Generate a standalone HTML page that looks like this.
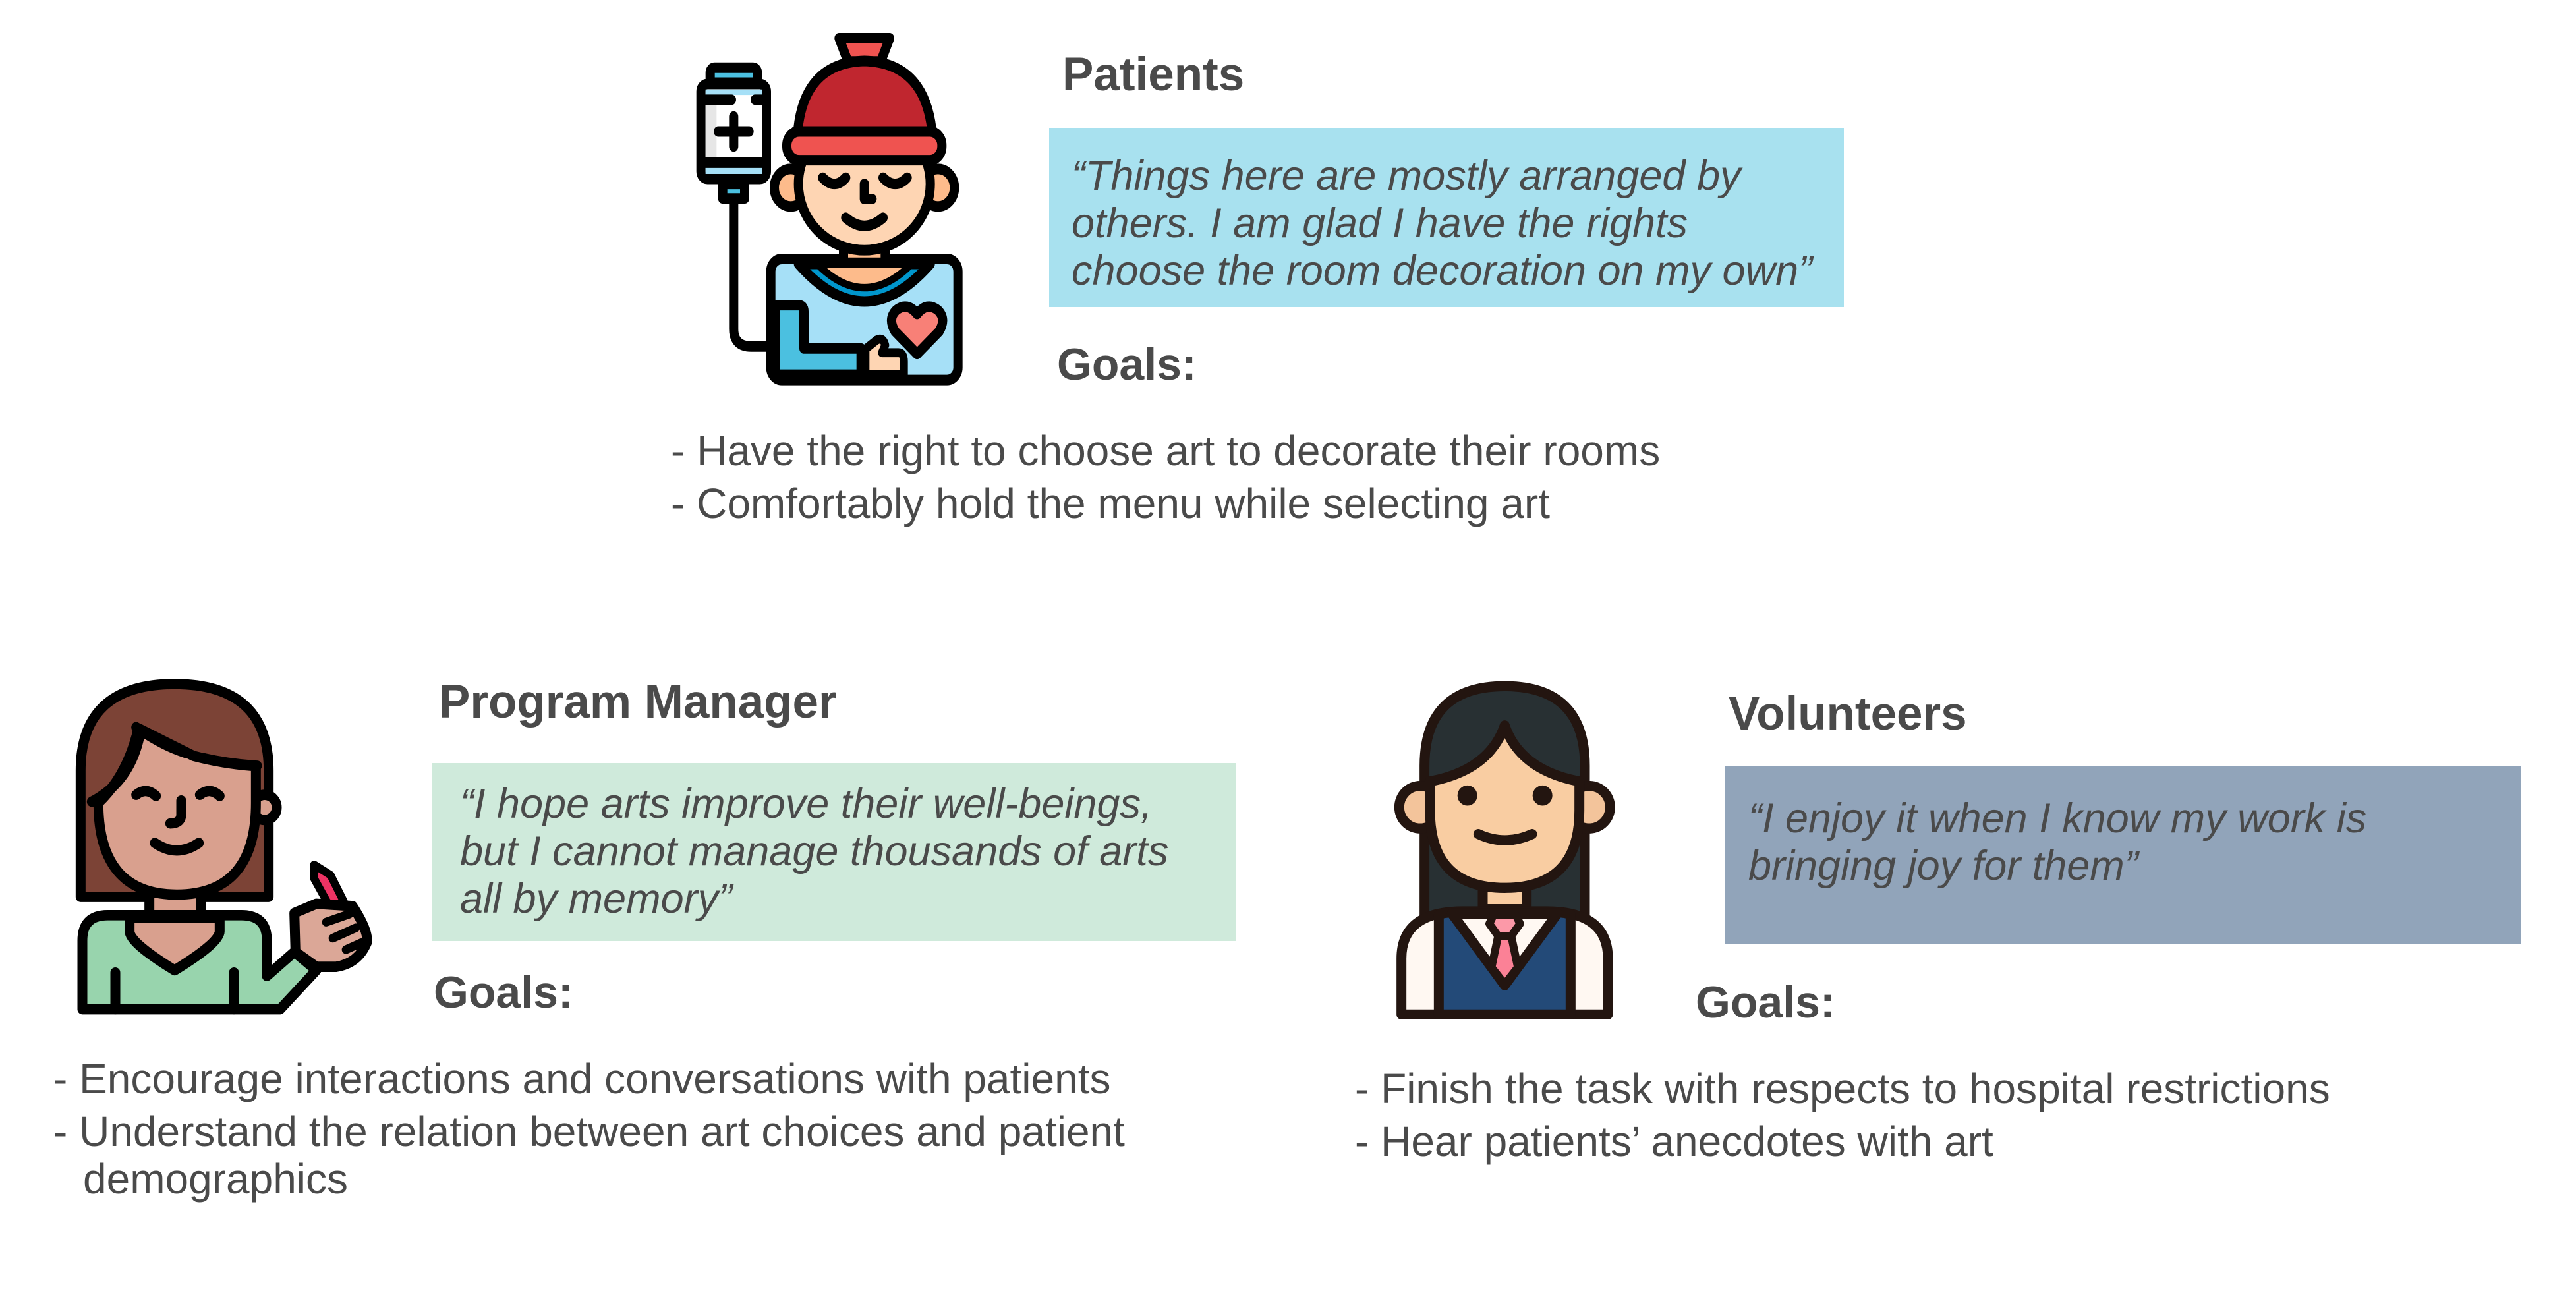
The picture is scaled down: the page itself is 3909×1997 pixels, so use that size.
<!DOCTYPE html>
<html><head><meta charset="utf-8">
<style>
html,body{margin:0;padding:0;background:#fff;}
body{width:3909px;height:1997px;position:relative;overflow:hidden;font-family:"Liberation Sans",Arial,sans-serif;color:#4a4a4a;}
.t{position:absolute;white-space:nowrap;}
.h{font-weight:bold;font-size:71px;line-height:71px;}
.g{font-weight:bold;font-size:68px;line-height:68px;}
.q{font-style:italic;font-size:63px;line-height:72px;}
.b{font-size:64px;line-height:80px;}
.box{position:absolute;}
svg{position:absolute;left:0;top:0;}
</style></head><body>

<div class="box" style="left:1592px;top:194px;width:1206px;height:272px;background:#a8e1ef"></div>
<div class="box" style="left:655px;top:1158px;width:1221px;height:270px;background:#cfeadb"></div>
<div class="box" style="left:2618px;top:1163px;width:1207px;height:270px;background:#91a4ba"></div>

<div class="t h" style="left:1612px;top:78px">Patients</div>
<div class="t q" style="left:1626px;top:231px">“Things here are mostly arranged by<br>others. I am glad I have the rights<br>choose the room decoration on my own”</div>
<div class="t g" style="left:1604px;top:519px">Goals:</div>
<div class="t b" style="left:1018px;top:644px">- Have the right to choose art to decorate their rooms<br>- Comfortably hold the menu while selecting art</div>

<div class="t h" style="left:666px;top:1030px">Program Manager</div>
<div class="t q" style="left:698px;top:1184px">“I hope arts improve their well-beings,<br>but I cannot manage thousands of arts<br>all by memory”</div>
<div class="t g" style="left:658px;top:1472px">Goals:</div>
<div class="t b" style="left:81px;top:1597px">- Encourage interactions and conversations with patients<br>- Understand the relation between art choices and patient</div>
<div class="t b" style="left:126px;top:1749px">demographics</div>

<div class="t h" style="left:2623px;top:1048px">Volunteers</div>
<div class="t q" style="left:2653px;top:1206px">“I enjoy it when I know my work is<br>bringing joy for them”</div>
<div class="t g" style="left:2573px;top:1487px">Goals:</div>
<div class="t b" style="left:2056px;top:1612px">- Finish the task with respects to hospital restrictions<br>- Hear patients’ anecdotes with art</div>

<svg width="3909" height="1997" viewBox="0 0 3909 1997">
<!-- Patient -->
<g transform="translate(1040,6) scale(0.33333,0.3794)" stroke="#000" stroke-width="42" stroke-linejoin="round" stroke-linecap="round">
  <path d="M220 800 V1300 Q220 1370 300 1370 H380" fill="none"/>
  <rect x="113" y="255" width="215" height="60" rx="20" fill="#4bc0e0"/>
  <rect x="71" y="320" width="298" height="380" rx="30" fill="#fff"/>
  <rect x="92" y="342" width="256" height="22" fill="#a6e0f7" stroke="none"/>
  <rect x="92" y="655" width="256" height="25" fill="#a6e0f7" stroke="none"/>
  <rect x="92" y="400" width="50" height="212" fill="#e6e6e6" stroke="none"/>
  <path d="M92 383 H210 M318 383 H348 M92 635 H348" fill="none"/>
  <path d="M150 510 H290 M220 450 V570" fill="none"/>
  <rect x="170" y="720" width="100" height="58" fill="#4bc0e0"/>
  <rect x="389" y="1020" width="852" height="484" rx="50" fill="#a6e0f7"/>
  <path d="M410 1205 H515 Q540 1205 540 1230 V1378 H800 V1483 H410 Z" fill="#4bc0e0"/>
  <path d="M515 1040 Q815 1340 1115 1040 Z" fill="#0096cc"/>
  <path d="M600 1040 Q815 1230 1030 1040 Z" fill="#fdbb8b" stroke-width="30"/>
  <rect x="720" y="940" width="190" height="95" fill="#fdbb8b"/>
  <circle cx="480" cy="735" r="75" fill="#fdbb8b"/>
  <circle cx="1150" cy="735" r="75" fill="#fdbb8b"/>
  <ellipse cx="815" cy="720" rx="300" ry="265" fill="#fed5b3"/>
  <path d="M700 137 H930 L890 230 H740 Z" fill="#ef5350"/>
  <path d="M510 530 Q530 235 815 228 Q1100 235 1125 530 Z" fill="#c0262f"/>
  <rect x="462" y="510" width="706" height="115" rx="55" fill="#ef5350"/>
  <path d="M500 510 H900 M1025 510 H1130" fill="none"/>
  <path d="M625 695 Q680 745 730 695 M900 695 Q955 745 1010 695 M815 720 V780 H850 M730 855 Q815 920 900 855" fill="none"/>
  <path d="M1055 1240 Q1100 1190 1150 1225 Q1190 1260 1155 1310 L1055 1400 L955 1310 Q920 1260 960 1225 Q1010 1190 1055 1240 Z" fill="#f88077"/>
  <path d="M820 1483 V1380 L870 1345 Q900 1330 910 1365 L895 1395 H970 Q995 1395 995 1430 V1483 Z" fill="#fed5b3" stroke-width="36"/>
</g>

<!-- Program Manager -->
<g transform="translate(100,1013) scale(0.33333,0.348)" stroke="#000" stroke-width="45" stroke-linejoin="round" stroke-linecap="round">
  <path d="M67 1000 V450 Q67 72 495 72 Q923 72 923 450 V1000 H67 Z" fill="#7c4336"/>
  <circle cx="905" cy="610" r="55" fill="#d9a08e"/>
  <rect x="380" y="990" width="235" height="140" fill="#d9a08e" stroke="none"/>
  <path d="M380 1000 V1130 M615 1000 V1130" fill="none"/>
  <path d="M148 590 Q148 990 505 990 Q865 990 865 590 V430 Q720 420 580 385 L330 265 Q280 470 148 590 Z" fill="#d9a08e"/>
  <path d="M320 260 Q440 340 545 372 M625 395 Q740 420 870 428 M118 585 Q290 500 335 300" fill="none"/>
  <path d="M320 555 Q365 520 410 560 M610 555 Q655 520 700 560 M525 580 V640 Q525 680 475 680 M405 765 Q505 830 605 765" fill="none"/>
  <path d="M75 1490 V1190 Q75 1080 190 1080 H800 Q915 1080 915 1190 V1345 L1040 1240 L1140 1320 L975 1490 Z" fill="#98d4ad"/>
  <path d="M290 1090 V1150 Q290 1200 495 1320 Q700 1200 700 1150 V1090 Z" fill="#d9a08e"/>
  <path d="M225 1330 V1490 M765 1330 V1490" fill="none"/>
  <path d="M1130 860 L1205 905 L1265 1020 L1205 1050 L1130 920 Z" fill="#ee3364" stroke-width="36"/>
  <path d="M1040 1070 L1140 1030 L1305 1040 Q1380 1150 1370 1200 Q1330 1290 1230 1305 L1140 1305 L1045 1240 Z" fill="#dba797"/>
  <path d="M1185 1110 L1290 1075 M1215 1180 L1320 1135 M1275 1230 L1345 1200" fill="none" stroke-width="38"/>
</g>

<!-- Volunteer -->
<g transform="translate(2110,1026) scale(0.33333,0.34)" stroke="#231510" stroke-width="45" stroke-linejoin="round" stroke-linecap="round">
  <path d="M155 1100 V400 Q155 45 520 45 Q885 45 885 400 V1100 Z" fill="#283033"/>
  <circle cx="135" cy="585" r="95" fill="#f3c49b"/>
  <circle cx="905" cy="585" r="95" fill="#f3c49b"/>
  <rect x="420" y="920" width="200" height="120" fill="#f9cda2"/>
  <path d="M180 470 Q450 420 520 220 Q590 420 860 470 V600 Q860 945 520 945 Q180 945 180 600 Z" fill="#f9cda2"/>
  <circle cx="350" cy="533" r="45" fill="#231510" stroke="none"/>
  <circle cx="692" cy="533" r="45" fill="#231510" stroke="none"/>
  <path d="M400 705 Q520 760 645 705" fill="none"/>
  <path d="M50 1510 V1260 Q50 1050 330 1050 H710 Q990 1050 990 1260 V1510 Z" fill="#fff8f2"/>
  <path d="M220 1065 V1510 H820 V1065 Q800 1055 760 1055 H280 Q240 1055 220 1065 Z" fill="#234a78"/>
  <path d="M280 1060 L520 1380 L760 1060 Z" fill="#fff8f2"/>
  <path d="M470 1065 H570 L590 1105 L550 1160 H490 L450 1105 Z" fill="#fc99a8" stroke-width="36"/>
  <path d="M490 1160 H550 L580 1300 L520 1375 L460 1300 Z" fill="#fb8196" stroke-width="36"/>
</g>
</svg>
</body></html>
